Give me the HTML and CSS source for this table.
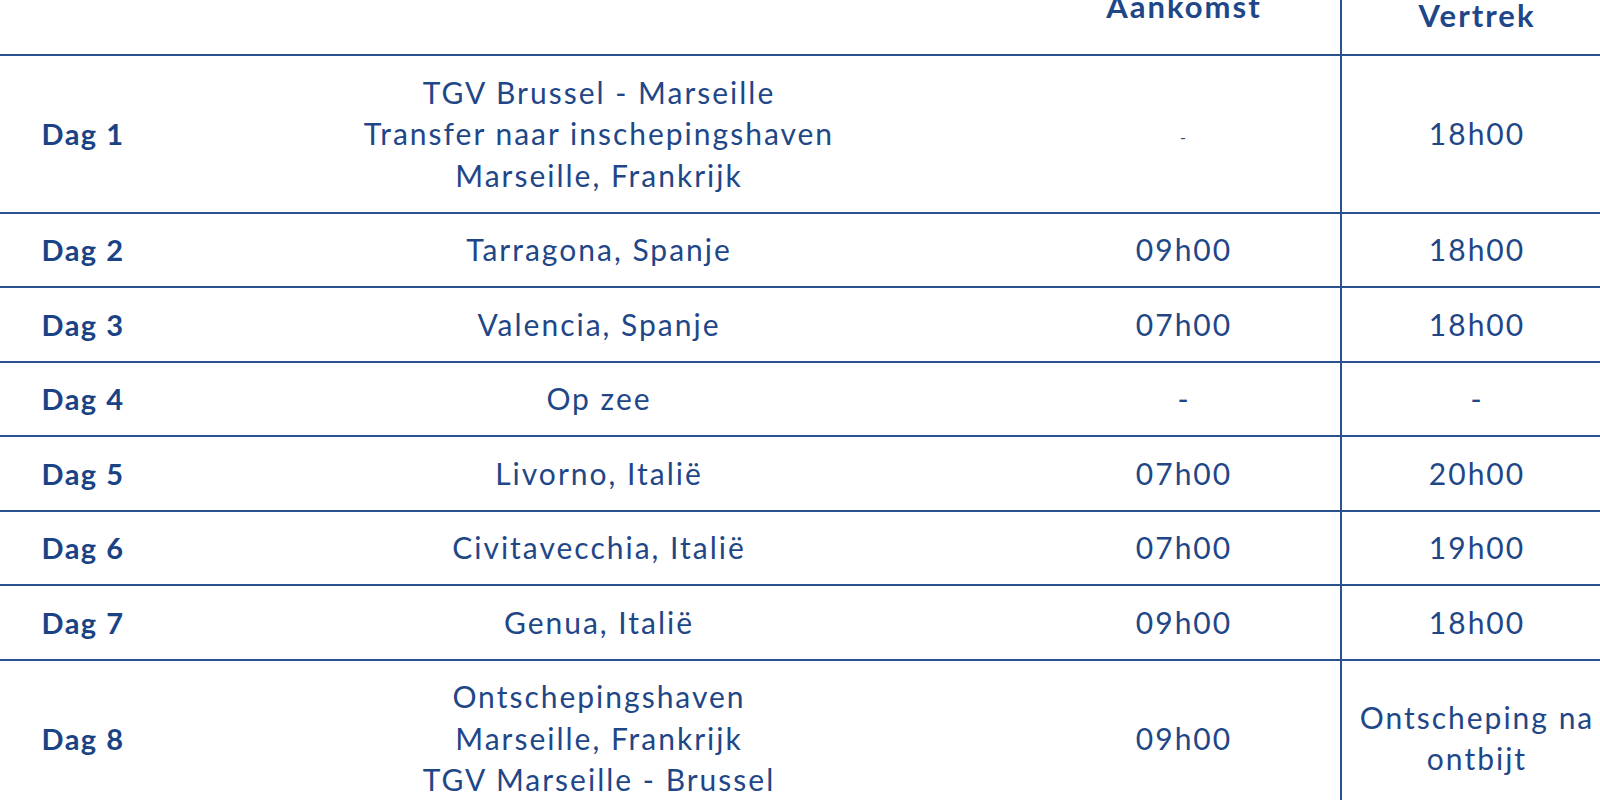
FILE: index.html
```html
<!DOCTYPE html>
<html lang="nl">
<head>
<meta charset="utf-8">
<title>Reisschema</title>
<link rel="stylesheet" href="styles.css">
</head>
<body>
<table class="schedule">
  <colgroup>
    <col class="c-day">
    <col class="c-place">
    <col class="c-arr">
    <col class="c-dep">
  </colgroup>
  <thead>
    <tr>
      <th class="h-blank"></th>
      <th class="h-blank"></th>
      <th class="h-arr">Aankomst</th>
      <th class="h-dep sep">Vertrek</th>
    </tr>
  </thead>
  <tbody>
    <tr>
      <td class="day">Dag 1</td>
      <td class="place">TGV Brussel - Marseille<br>Transfer naar inschepingshaven<br>Marseille, Frankrijk</td>
      <td><span class="small-dash">-</span></td>
      <td class="sep">18h00</td>
    </tr>
    <tr>
      <td class="day">Dag 2</td>
      <td class="place">Tarragona, Spanje</td>
      <td>09h00</td>
      <td class="sep">18h00</td>
    </tr>
    <tr>
      <td class="day">Dag 3</td>
      <td class="place">Valencia, Spanje</td>
      <td>07h00</td>
      <td class="sep">18h00</td>
    </tr>
    <tr>
      <td class="day">Dag 4</td>
      <td class="place">Op zee</td>
      <td>-</td>
      <td class="sep">-</td>
    </tr>
    <tr>
      <td class="day">Dag 5</td>
      <td class="place">Livorno, Italië</td>
      <td>07h00</td>
      <td class="sep">20h00</td>
    </tr>
    <tr>
      <td class="day">Dag 6</td>
      <td class="place">Civitavecchia, Italië</td>
      <td>07h00</td>
      <td class="sep">19h00</td>
    </tr>
    <tr>
      <td class="day">Dag 7</td>
      <td class="place">Genua, Italië</td>
      <td>09h00</td>
      <td class="sep">18h00</td>
    </tr>
    <tr>
      <td class="day">Dag 8</td>
      <td class="place">Ontschepingshaven<br>Marseille, Frankrijk<br>TGV Marseille - Brussel</td>
      <td>09h00</td>
      <td class="sep">Ontscheping na ontbijt</td>
    </tr>
  </tbody>
</table>
</body>
</html>
```

FILE: styles.css
```css
html, body {
  margin: 0;
  padding: 0;
  background: #ffffff;
  overflow: hidden;
}

body {
  width: 1600px;
  height: 800px;
  font-family: Lato, "Open Sans", sans-serif;
  color: #1f4788;
}

.schedule {
  table-layout: fixed;
  width: 1612px;
  border-collapse: separate;
  border-spacing: 0;
  font-size: 30px;
  line-height: 41.5px;
  letter-spacing: 2px;
}

.c-day { width: 170px; }
.c-place { width: 858px; }
.c-arr { width: 312px; }
.c-dep { width: 272px; }

.schedule th {
  height: 54px;
  padding: 0;
  vertical-align: top;
  font-size: 31px;
  font-weight: 700;
  line-height: 30px;
  text-align: center;
  border-bottom: 2px solid #2a5291;
}

.schedule th.h-arr {
  line-height: 13px;
}

.schedule td {
  padding: 15.5px 16px;
  text-align: center;
  vertical-align: middle;
  border-bottom: 2px solid #2a5291;
}

.schedule td.day {
  font-size: 29px;
  font-weight: 700;
  letter-spacing: 1.5px;
  color: #1a4385;
  padding-left: 0;
  padding-right: 4px;
}

.schedule td.sep {
  padding-left: 8px;
  padding-right: 8px;
}

.schedule .sep {
  border-left: 2px solid #2a5291;
}

.small-dash {
  font-size: 16px;
}
```
